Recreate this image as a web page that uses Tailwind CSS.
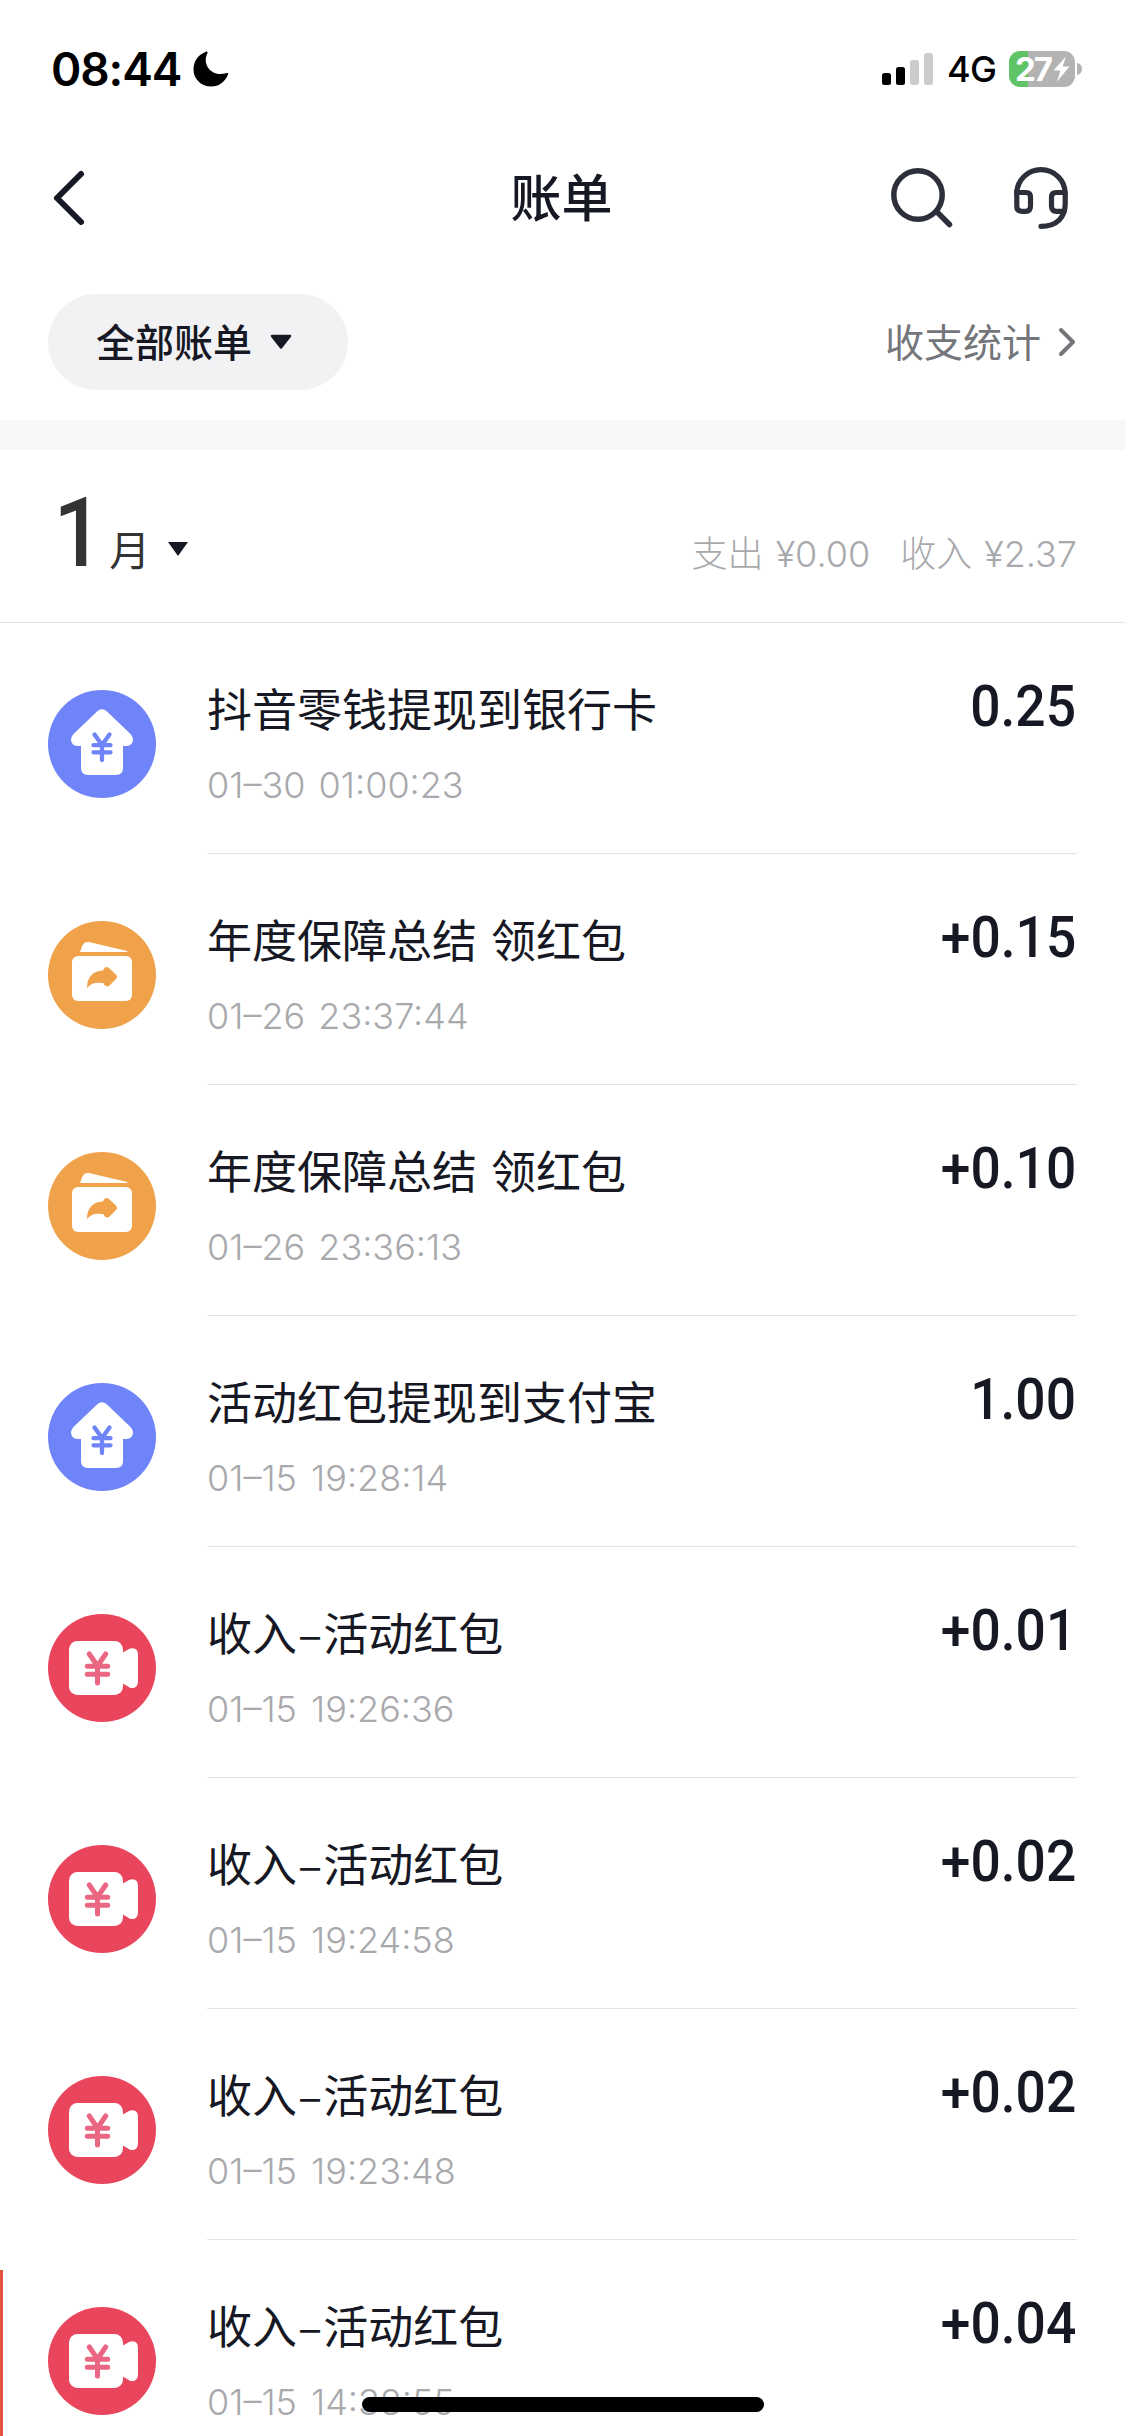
<!DOCTYPE html>
<html lang="zh-CN">
<head>
<meta charset="utf-8">
<title>账单</title>
<script src="https://cdn.jsdelivr.net/npm/@tailwindcss/browser@4"></script>
</head>
<body class="bg-white">
<svg class="hidden">
  <symbol id="house" viewBox="0 0 108 108">
    <circle cx="54" cy="54" r="54" fill="#6e84f8"/>
    <path d="M49 21.500Q54 17 59 21.500L82.500 44Q86 48 84.500 52Q83 56 78 56H75V78Q75 85 68 85H40Q33 85 33 78V56H30Q25 56 23.500 52Q22 48 25.500 44Z" fill="#fff"/>
    <path d="M46.500 44.500L54 55L61.500 44.500M45.500 55.200H62.500M45.500 62.300H62.500M54 55V70" fill="none" stroke="#6e84f8" stroke-width="4.300" stroke-linecap="round" stroke-linejoin="round"/>
  </symbol>
  <symbol id="share" viewBox="0 0 108 108">
    <circle cx="54" cy="54" r="54" fill="#f0a24b"/>
    <path d="M32 31L34 25.500Q36 20.200 42 21.200L79 30Q80.500 31 79 31Z" fill="#fff"/>
    <rect x="24" y="35" width="60" height="45" rx="6" fill="#fff"/>
    <path d="M39 67C39 57 44 50 55 49.500C56 46.500 58.500 45 61 47L68 53.500Q70 56 68 58L61.500 64.500C59 66.500 56.500 65 55.500 62.300C47 61 43 62.500 39 67Z" fill="#f0a24b"/>
  </symbol>
  <symbol id="video" viewBox="0 0 108 108">
    <circle cx="54" cy="54" r="54" fill="#e9455c"/>
    <rect x="21" y="27" width="54" height="54" rx="8.500" fill="#fff"/>
    <path d="M74 39L81.500 34.700Q90 32.500 90 41V67Q90 75 82.500 74L74 69Z" fill="#fff"/>
    <path d="M41.300 40L49.500 52L57.700 40M39.300 52.300H59.700M39.300 60.300H59.700M49.500 52V69" fill="none" stroke="#ea6683" stroke-width="5" stroke-linecap="round" stroke-linejoin="round"/>
  </symbol>
</svg>
<div class="relative h-[2436px] w-[1125px] overflow-hidden bg-white font-['Noto_Sans_CJK_SC',sans-serif] text-[#161823]">

  <div class="flex h-[138px] items-center justify-between pl-[51px] pr-[43px]">
    <div class="flex items-center gap-3 text-black">
      <span class="font-['Inter',sans-serif] text-[46px] font-semibold leading-[60px] tracking-[-1.100px]">08:44</span>
      <svg class="h-9 w-9" viewBox="0 0 36 36"><path d="M13 0.700C14.500 0.300 15 1 14.300 2.500C9 13 18 26.500 33 22.200C34.800 21.500 35.700 22 35 23.500C32 31 26 35.500 18.500 35.500C8 35.500 0.500 28 0.500 18.500C0.500 10 5.500 3.200 13 0.700Z"/></svg>
    </div>
    <div class="flex items-center">
      <svg class="h-9 w-[51px]" viewBox="0 0 51 36"><rect y="22" width="9" height="12" rx="2.500"/><rect x="14" y="16" width="9" height="18" rx="2.500"/><rect x="28" y="9" width="9" height="25" rx="2.500" fill="#ccc"/><rect x="42" y="2" width="9" height="32" rx="2.500" fill="#ccc"/></svg>
      <span class="ml-3.5 font-['Inter',sans-serif] text-[36px] leading-[44px] font-medium tracking-[-0.800px] text-black">4G</span>
      <div class="ml-[13px] flex h-9 w-[66px] items-center gap-0.5 rounded-[11px] bg-linear-to-r from-[#5fc466] from-[19px] to-[#b3b3b3] to-[19px] pl-1.5 text-white">
        <span class="font-['Inter',sans-serif] text-[33px] font-bold leading-9 tracking-[-2px]">27</span>
        <svg class="h-[26px] w-[17px]" viewBox="0 0 17 26"><path d="M13 0.500L0.500 14.500H7.500L4 25.500L16.500 10.500H9.500Z" fill="#fff"/></svg>
      </div>
      <svg class="ml-0.5 h-3 w-[5px]" viewBox="0 0 5 12"><path d="M0 0Q5 1 5 6T0 12Z" fill="#b3b3b3"/></svg>
    </div>
  </div>

  <div class="grid h-[120px] grid-cols-[1fr_auto_1fr] items-center pl-[52px] pr-[54px]">
    <svg class="h-[60px] w-9" viewBox="0 0 36 60" fill="none" stroke="#161823" stroke-width="6" stroke-linecap="round" stroke-linejoin="round"><path d="M29 6L5 30L29 54"/></svg>
    <h1 class="pb-1.5 text-[51px] font-medium leading-[72px]">账单</h1>
    <div class="flex justify-end gap-[57px]">
      <svg class="h-[66px] w-[66px]" viewBox="888 165 66 66" fill="none" stroke="#2d2f3a" stroke-width="5.500" stroke-linecap="round"><circle cx="918" cy="195" r="24.200"/><path d="M937.500 212.500L949.500 224.500"/></svg>
      <svg class="h-[66px] w-[60px]" viewBox="1011 165 60 66" fill="none" stroke="#2d2f3a" stroke-width="5.200" stroke-linecap="round"><path d="M1016.800 193.500A24.200 24 0 0 1 1065.200 193.500V204C1065.200 217 1057 226.300 1041 226.300"/><path d="M1016.800 192.500H1026Q1030.500 192.500 1030.500 197V206Q1030.500 211.300 1025.500 211.300H1022Q1016.800 211.300 1016.800 206ZM1065.200 192.500H1056Q1051.500 192.500 1051.500 197V206Q1051.500 211.300 1056.500 211.300H1064"/></svg>
    </div>
  </div>

  <div class="flex h-[162px] items-center justify-between pl-12 pr-12 pt-[6px]">
    <div class="flex h-24 w-[300px] items-center rounded-full bg-[#f2f2f5] pl-12">
      <span class="pb-1 text-[39px] font-medium leading-[58px]">全部账单</span>
      <svg class="ml-[17px] h-4 w-6" viewBox="0 0 24 16"><path d="M3 2H21L12 13.500Z" fill="#161823" stroke="#161823" stroke-width="2.500" stroke-linejoin="round"/></svg>
    </div>
    <div class="flex items-center text-[#75767b]">
      <span class="pb-1 text-[39px] leading-[58px]">收支统计</span>
      <svg class="ml-4 h-8 w-5" viewBox="0 0 20 32" fill="none" stroke="currentColor" stroke-width="4" stroke-linecap="round" stroke-linejoin="round"><path d="M4 4L16 16L4 28"/></svg>
    </div>
  </div>

  <div class="h-[30px] bg-[#f7f7f7]"></div>

  <div class="flex h-[173px] items-end justify-between border-b border-[#e3e3e4] pl-12 pr-12">
    <div class="flex items-baseline pb-[39px] text-[#333]">
      <span class="origin-right scale-x-90 font-['Roboto',sans-serif] text-[97px] font-medium leading-[100px]">1</span>
      <span class="ml-[6px] text-[41px] leading-[60px]">月</span>
      <svg class="mb-[26px] ml-4 h-4 w-6 self-end" viewBox="0 0 24 16"><path d="M2 1H22L12 15Z" fill="#161823"/></svg>
    </div>
    <div class="flex gap-[30px] pb-[40px] font-['Inter','Noto_Sans_CJK_SC',sans-serif] text-[36px] font-light leading-[56px] text-[#a8a9ac] [word-spacing:2px]">
      <span>支出 ¥0.00</span><span>收入 ¥2.37</span>
    </div>
  </div>

  <ul>
    <li class="flex h-[231px] px-12"><svg class="mt-[67px] h-[108px] w-[108px]"><use href="#house"/></svg><div class="ml-[51px] flex flex-1 justify-between border-b border-[#e3e3e4]"><div class="pt-[55px]"><p class="text-[45px] leading-[60px] [word-spacing:4px]">抖音零钱提现到银行卡</p><p class="mt-[23px] font-['Inter',sans-serif] text-[36px] font-light leading-[48px] text-[#a8a9ac] [word-spacing:3px]">01–30 01:00:23</p></div><span class="mt-[53px] mr-px h-[60px] origin-right scale-x-92 font-['Roboto',sans-serif] text-[58px] font-medium leading-[60px]">0.25</span></div></li>
    <li class="flex h-[231px] px-12"><svg class="mt-[67px] h-[108px] w-[108px]"><use href="#share"/></svg><div class="ml-[51px] flex flex-1 justify-between border-b border-[#e3e3e4]"><div class="pt-[55px]"><p class="text-[45px] leading-[60px] [word-spacing:4px]">年度保障总结 领红包</p><p class="mt-[23px] font-['Inter',sans-serif] text-[36px] font-light leading-[48px] text-[#a8a9ac] [word-spacing:3px]">01–26 23:37:44</p></div><span class="mt-[53px] mr-px h-[60px] origin-right scale-x-92 font-['Roboto',sans-serif] text-[58px] font-medium leading-[60px]">+0.15</span></div></li>
    <li class="flex h-[231px] px-12"><svg class="mt-[67px] h-[108px] w-[108px]"><use href="#share"/></svg><div class="ml-[51px] flex flex-1 justify-between border-b border-[#e3e3e4]"><div class="pt-[55px]"><p class="text-[45px] leading-[60px] [word-spacing:4px]">年度保障总结 领红包</p><p class="mt-[23px] font-['Inter',sans-serif] text-[36px] font-light leading-[48px] text-[#a8a9ac] [word-spacing:3px]">01–26 23:36:13</p></div><span class="mt-[53px] mr-px h-[60px] origin-right scale-x-92 font-['Roboto',sans-serif] text-[58px] font-medium leading-[60px]">+0.10</span></div></li>
    <li class="flex h-[231px] px-12"><svg class="mt-[67px] h-[108px] w-[108px]"><use href="#house"/></svg><div class="ml-[51px] flex flex-1 justify-between border-b border-[#e3e3e4]"><div class="pt-[55px]"><p class="text-[45px] leading-[60px]">活动红包提现到支付宝</p><p class="mt-[23px] font-['Inter',sans-serif] text-[36px] font-light leading-[48px] text-[#a8a9ac] [word-spacing:4px]">01–15 19:28:14</p></div><span class="mt-[53px] mr-px h-[60px] origin-right scale-x-92 font-['Roboto',sans-serif] text-[58px] font-medium leading-[60px]">1.00</span></div></li>
    <li class="flex h-[231px] px-12"><svg class="mt-[67px] h-[108px] w-[108px]"><use href="#video"/></svg><div class="ml-[51px] flex flex-1 justify-between border-b border-[#e3e3e4]"><div class="pt-[55px]"><p class="text-[45px] leading-[60px]">收入<span class="mx-px">–</span>活动红包</p><p class="mt-[23px] font-['Inter',sans-serif] text-[36px] font-light leading-[48px] text-[#a8a9ac] [word-spacing:4px]">01–15 19:26:36</p></div><span class="mt-[53px] mr-px h-[60px] origin-right scale-x-92 font-['Roboto',sans-serif] text-[58px] font-medium leading-[60px]">+0.01</span></div></li>
    <li class="flex h-[231px] px-12"><svg class="mt-[67px] h-[108px] w-[108px]"><use href="#video"/></svg><div class="ml-[51px] flex flex-1 justify-between border-b border-[#e3e3e4]"><div class="pt-[55px]"><p class="text-[45px] leading-[60px]">收入<span class="mx-px">–</span>活动红包</p><p class="mt-[23px] font-['Inter',sans-serif] text-[36px] font-light leading-[48px] text-[#a8a9ac] [word-spacing:4px]">01–15 19:24:58</p></div><span class="mt-[53px] mr-px h-[60px] origin-right scale-x-92 font-['Roboto',sans-serif] text-[58px] font-medium leading-[60px]">+0.02</span></div></li>
    <li class="flex h-[231px] px-12"><svg class="mt-[67px] h-[108px] w-[108px]"><use href="#video"/></svg><div class="ml-[51px] flex flex-1 justify-between border-b border-[#e3e3e4]"><div class="pt-[55px]"><p class="text-[45px] leading-[60px]">收入<span class="mx-px">–</span>活动红包</p><p class="mt-[23px] font-['Inter',sans-serif] text-[36px] font-light leading-[48px] text-[#a8a9ac] [word-spacing:4px]">01–15 19:23:48</p></div><span class="mt-[53px] mr-px h-[60px] origin-right scale-x-92 font-['Roboto',sans-serif] text-[58px] font-medium leading-[60px]">+0.02</span></div></li>
    <li class="flex h-[231px] px-12"><svg class="mt-[67px] h-[108px] w-[108px]"><use href="#video"/></svg><div class="ml-[51px] flex flex-1 justify-between border-b border-[#e3e3e4]"><div class="pt-[55px]"><p class="text-[45px] leading-[60px]">收入<span class="mx-px">–</span>活动红包</p><p class="mt-[23px] font-['Inter',sans-serif] text-[36px] font-light leading-[48px] text-[#a8a9ac] [word-spacing:4px]">01–15 14:38:55</p></div><span class="mt-[53px] mr-px h-[60px] origin-right scale-x-92 font-['Roboto',sans-serif] text-[58px] font-medium leading-[60px]">+0.04</span></div></li>
  </ul>

  <div class="absolute bottom-0 left-0 h-[166px] w-[3px] bg-[#e2523f]"></div>
  <div class="absolute bottom-6 left-[362px] h-[15px] w-[402px] rounded-full bg-black"></div>
</div>
</body>
</html>
